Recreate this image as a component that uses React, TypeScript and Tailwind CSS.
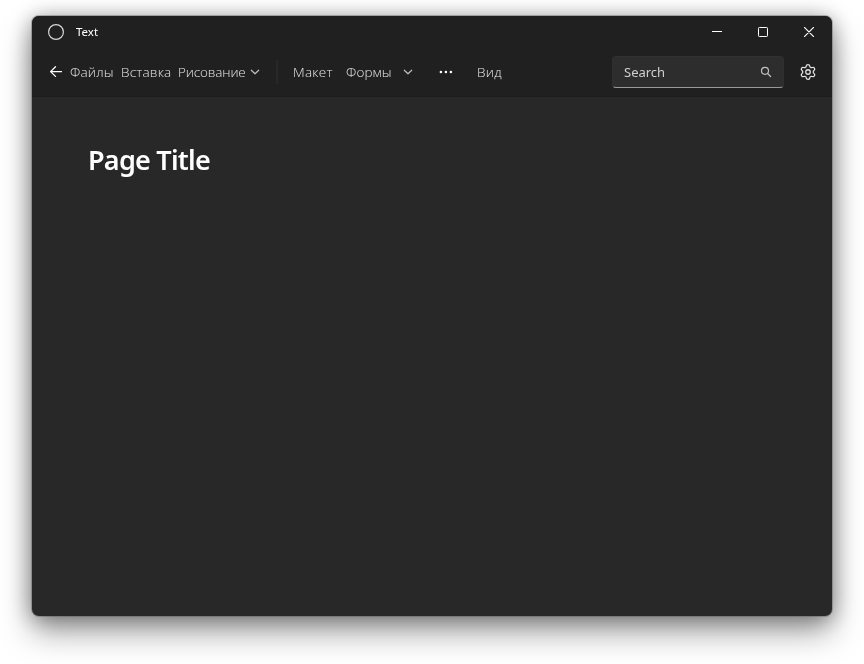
import { Settings } from 'lucide-react';

function Chevron() {
  return (
    <svg width="10" height="6" viewBox="0 0 10 6" fill="none" stroke="#bcbcbc" strokeWidth="1.2" strokeLinecap="round" strokeLinejoin="round">
      <path d="M1.3 1.2L5 4.8l3.7-3.6" />
    </svg>
  );
}

const item = "whitespace-nowrap text-[13.5px] font-light leading-5 text-[#e6e6e6] font-['Open_Sans',sans-serif]";

export default function App() {
  return (
    <div className="h-[664px] w-[864px] overflow-hidden bg-white px-8 pt-4 font-['Noto_Sans',sans-serif]">
      <div className="flex h-[600px] w-[800px] flex-col overflow-hidden rounded-[7px] bg-[#282828] shadow-[0_0_0_1px_rgba(90,90,90,0.4),0_16px_32px_rgba(0,0,0,0.37),0_2px_21px_rgba(0,0,0,0.37)] will-change-transform">
        <header className="h-[81px] shrink-0 border-b border-[#1d1d1d] bg-[#202020]">
          <div className="flex h-8 items-center pl-4 text-white">
            <svg width="16" height="16" viewBox="0 0 16 16" fill="none" stroke="#d8d8d8" strokeWidth="1.2">
              <circle cx="8" cy="8" r="7.4" />
            </svg>
            <span className="ml-3 text-[11.5px] leading-4">Text</span>
            <div className="ml-auto flex">
              <span className="flex w-[46px] items-center justify-center">
                <svg width="10" height="10" viewBox="0 0 10 10"><path d="M0 4.5h10" stroke="#fff" /></svg>
              </span>
              <span className="flex w-[46px] items-center justify-center">
                <svg width="10" height="10" viewBox="0 0 10 10" fill="none" stroke="#fff"><rect x=".5" y=".5" width="9" height="9" rx="0.8" /></svg>
              </span>
              <span className="flex w-[46px] items-center justify-center">
                <svg width="10" height="10" viewBox="0 0 10 10" fill="none" stroke="#fff" strokeWidth="1.15" strokeLinecap="round"><path d="M.3.3l9.4 9.4M9.7.3L.3 9.7" /></svg>
              </span>
            </div>
          </div>
          <nav className="flex h-12 items-center pl-[18px]">
            <svg width="12" height="12" viewBox="0 0 12 12" fill="none" stroke="#fff" strokeWidth="1.3" strokeLinecap="round" strokeLinejoin="round">
              <path d="M11.5 5.6H.8M5.5 .8L.6 5.6l4.9 4.8" />
            </svg>
            <span className={`${item} ml-2 w-[51px] tracking-[0.2px]`}>Файлы</span>
            <span className={`${item} w-[57px] tracking-[0.2px]`}>Вставка</span>
            <span className={`${item} w-[72px] tracking-[-0.14px]`}>Рисование</span>
            <Chevron />
            <span className="ml-[16px] h-6 w-[2px] bg-[#282828]" />
            <span className={`${item} ml-[15px] w-[53px] tracking-[0.25px]`}>Макет</span>
            <span className={`${item} w-[57px] tracking-[0.12px]`}>Формы</span>
            <Chevron />
            <svg className="ml-[26px]" width="14" height="4" viewBox="0 0 14 4" fill="#fff">
              <circle cx="1.9" cy="2" r="1.3" /><circle cx="6.9" cy="2" r="1.3" /><circle cx="11.9" cy="2" r="1.3" />
            </svg>
            <span className={`${item} ml-[24px] tracking-[0.4px]`}>Вид</span>
            <div className="ml-auto flex h-8 w-[172px] items-center justify-between rounded-[4px] border border-[#303030] border-b-[#9a9a9a] bg-[#2d2d2d] px-[11px]">
              <span className="text-[13px] leading-5 text-[#cfcfcf]">Search</span>
              <svg width="12" height="12" viewBox="0 0 12 12" fill="none" stroke="#c0c0c0" strokeWidth="1.2" strokeLinecap="round">
                <circle cx="5" cy="4.8" r="3.5" /><path d="M7.6 7.5l3 3" />
              </svg>
            </div>
            <Settings className="ml-[15px] mr-[15px] text-[#e0e0e0]" size={18} strokeWidth={1.7} />
          </nav>
        </header>
        <main className="px-[56px] pt-[45px]">
          <h1 className="text-[27px] font-semibold leading-9 tracking-[-0.75px] text-white">Page Title</h1>
        </main>
      </div>
    </div>
  );
}
